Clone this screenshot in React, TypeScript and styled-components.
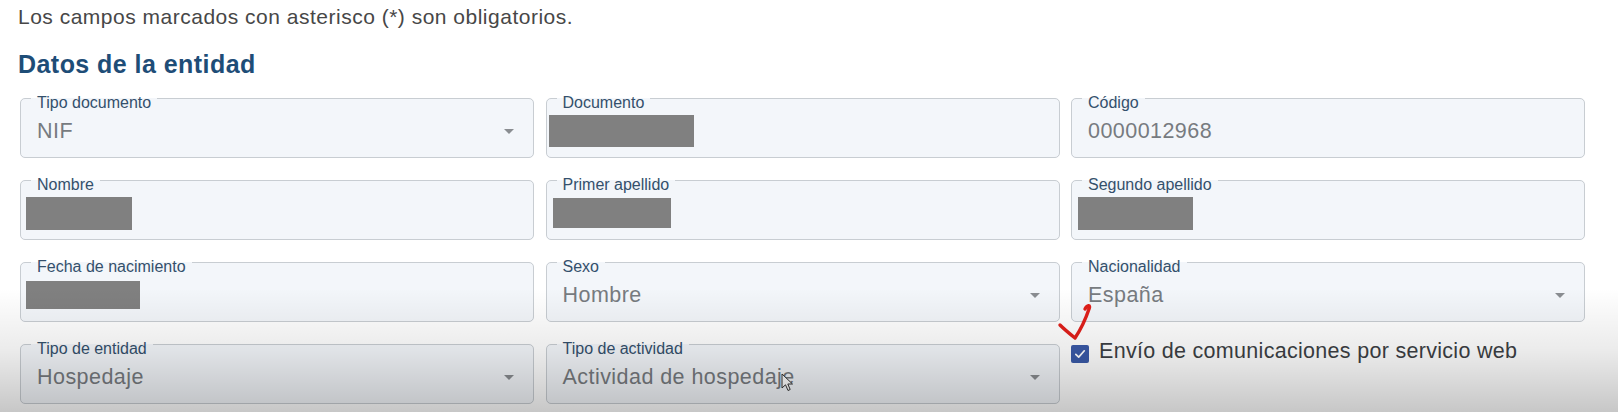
import React from "react";
import styled, { createGlobalStyle } from "styled-components";

interface FieldData {
  label: string;
  value?: string;
  select?: boolean;
  redact?: { x: number; w: number; h: number };
}

// redact: the grey boxes that hide personal data in the capture
const fields: FieldData[] = [
  { label: "Tipo documento", value: "NIF", select: true },
  { label: "Documento", redact: { x: -14, w: 145, h: 32 } },
  { label: "Código", value: "0000012968" },
  { label: "Nombre", redact: { x: -11, w: 106, h: 33 } },
  { label: "Primer apellido", redact: { x: -10, w: 118, h: 30 } },
  { label: "Segundo apellido", redact: { x: -10, w: 115, h: 33 } },
  { label: "Fecha de nacimiento", redact: { x: -11, w: 114, h: 28 } },
  { label: "Sexo", value: "Hombre", select: true },
  { label: "Nacionalidad", value: "España", select: true },
  { label: "Tipo de entidad", value: "Hospedaje", select: true },
  { label: "Tipo de actividad", value: "Actividad de hospedaje", select: true },
];

const App: React.FC = () => {
  return (
    <>
      <GlobalStyle />
      <Page>
        <Intro>Los campos marcados con asterisco (*) son obligatorios.</Intro>
        <Heading>Datos de la entidad</Heading>
        <Grid>
          {fields.map((f) => (
            <Field key={f.label}>
              <Legend>{f.label}</Legend>
              <Body>
                {f.value && <Value>{f.value}</Value>}
                {f.redact && (
                  <Redact $x={f.redact.x} $w={f.redact.w} $h={f.redact.h} />
                )}
                {f.select && <Caret />}
              </Body>
            </Field>
          ))}
          <CheckRow>
            <CheckBox>
              <svg width="14" height="14" viewBox="0 0 14 14">
                <path
                  d="M2.8 7.3 L5.7 10.1 L11.3 3.8"
                  fill="none"
                  stroke="#fff"
                  strokeWidth="1.7"
                  strokeLinecap="round"
                  strokeLinejoin="round"
                />
              </svg>
            </CheckBox>
            <CheckLabel>Envío de comunicaciones por servicio web</CheckLabel>
          </CheckRow>
        </Grid>

        {/* hand-drawn red annotation pointing at the checkbox */}
        <Arrow width="40" height="44" viewBox="0 0 40 44">
          <path
            d="M31 8 C33 4 37 3 35 8 C32 17 27 28 21 37 M6 24 C11 29 16 33 21 37"
            fill="none"
            stroke="#e11f1a"
            strokeWidth="3.4"
            strokeLinecap="round"
            strokeLinejoin="round"
          />
        </Arrow>
        <Cursor width="14" height="20" viewBox="0 0 14 20">
          <path
            d="M1 1 L1 15 L4.5 11.8 L7 17.5 L9.2 16.5 L6.8 11 L11.5 11 Z"
            fill="#fff"
            stroke="#333"
            strokeWidth="1"
            strokeLinejoin="round"
          />
        </Cursor>
        <Shade />
      </Page>
    </>
  );
};

const GlobalStyle = createGlobalStyle`
  html, body {
    margin: 0;
    padding: 0;
    background: #ffffff;
  }
  body {
    font-family: "Liberation Sans", Arial, sans-serif;
  }
`;

const Page = styled.div`
  position: relative;
  width: 1618px;
  height: 412px;
  overflow: hidden;
  box-sizing: border-box;
  padding: 5px 0 0 18px;
`;

const Intro = styled.p`
  margin: 0;
  font-size: 21px;
  line-height: 24px;
  letter-spacing: 0.5px;
  color: #474747;
`;

const Heading = styled.h2`
  margin: 20px 0 0;
  font-size: 25px;
  line-height: 30px;
  font-weight: bold;
  letter-spacing: 0.45px;
  color: #1e4d77;
`;

const Grid = styled.div`
  display: grid;
  grid-template-columns: repeat(3, 514px);
  column-gap: 11.5px;
  row-gap: 8px;
  margin: 5px 0 0 2px;
`;

const Field = styled.fieldset`
  margin: 0;
  padding: 0 16px;
  min-width: 0;
  height: 74px;
  box-sizing: border-box;
  border: 1px solid #c8cdd2;
  border-radius: 5px;
  background: #f3f6fa;
`;

const Legend = styled.legend`
  margin-left: -6px;
  padding: 10px 6px 0;
  font-size: 16px;
  line-height: 18px;
  color: #34506c;
`;

const Body = styled.div`
  display: flex;
  align-items: center;
  justify-content: space-between;
  height: 38px;
`;

const Value = styled.div`
  font-size: 21.5px;
  line-height: 24px;
  letter-spacing: 0.45px;
  color: #777b80;
  white-space: nowrap;
`;

const Redact = styled.div<{ $x: number; $w: number; $h: number }>`
  margin-left: ${(p) => p.$x}px;
  width: ${(p) => p.$w}px;
  height: ${(p) => p.$h}px;
  margin-right: auto;
  background: #808080;
`;

const Caret = styled.span`
  margin-right: 3px;
  width: 0;
  height: 0;
  border-left: 5px solid transparent;
  border-right: 5px solid transparent;
  border-top: 5px solid #8a8d91;
`;

const CheckRow = styled.div`
  display: flex;
  align-items: flex-start;
  gap: 10px;
  padding-top: 8px;
`;

const CheckBox = styled.span`
  display: flex;
  align-items: center;
  justify-content: center;
  flex: none;
  width: 18px;
  height: 18px;
  margin-top: 7px;
  border-radius: 2px;
  background: #3a5aa8;
`;

const CheckLabel = styled.span`
  font-size: 21.5px;
  line-height: 26px;
  letter-spacing: 0.3px;
  color: #3c3f44;
`;

const Arrow = styled.svg`
  position: absolute;
  left: 1054px;
  top: 301px;
`;

const Cursor = styled.svg`
  position: absolute;
  left: 781px;
  top: 373px;
`;

const Shade = styled.div`
  position: absolute;
  inset: 0;
  pointer-events: none;
  background: linear-gradient(
    to bottom,
    rgba(0, 0, 0, 0) 70%,
    rgba(0, 0, 0, 0.08) 85%,
    rgba(0, 0, 0, 0.22) 100%
  );
`;

export default App;
